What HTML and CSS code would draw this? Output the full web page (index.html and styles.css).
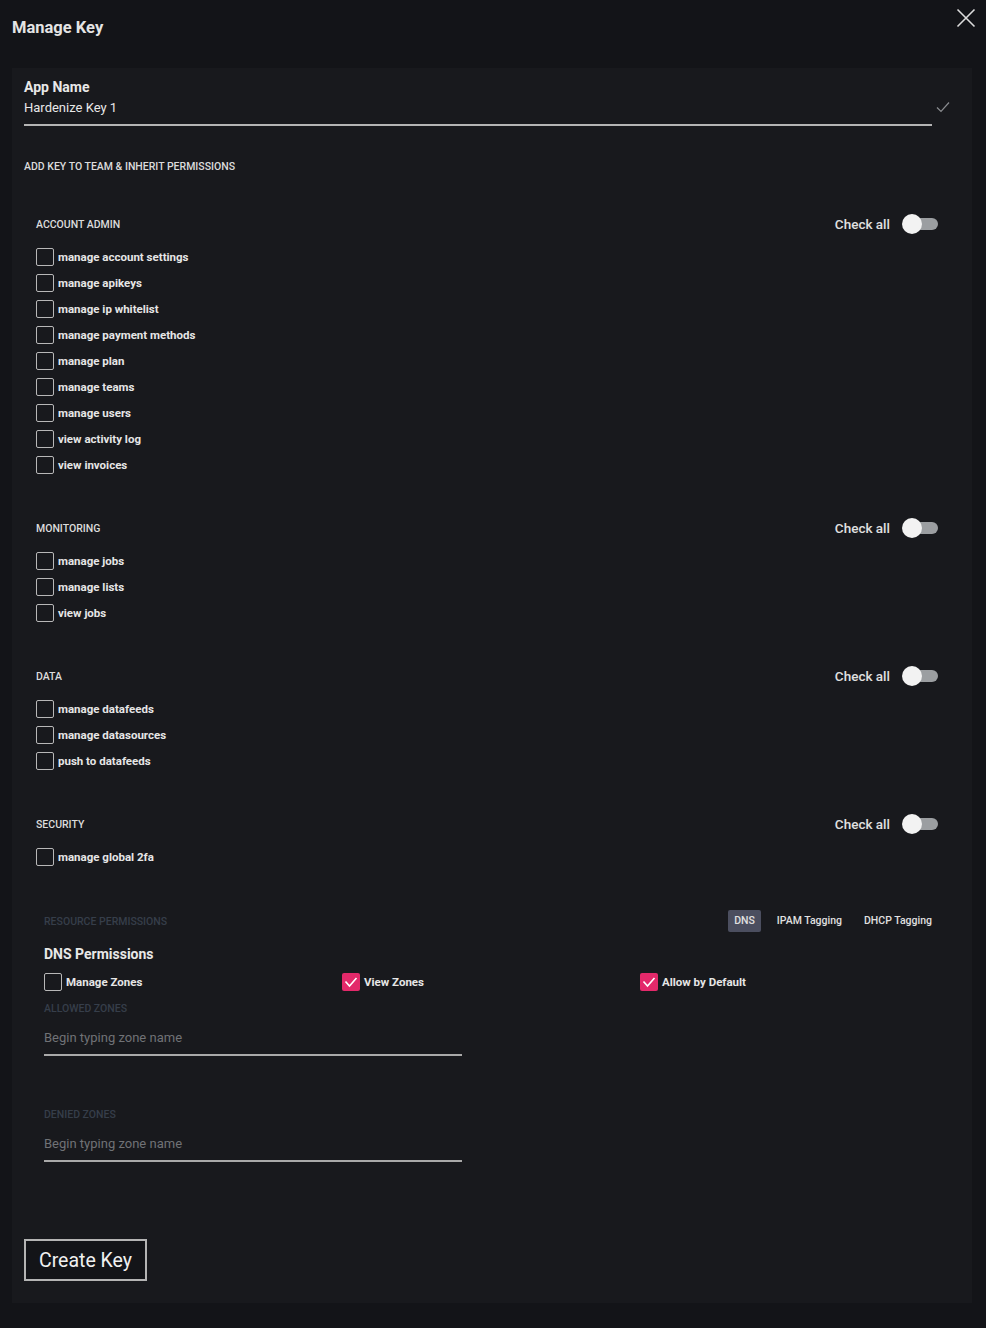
FILE: index.html
```html
<!DOCTYPE html>
<html lang="en">
<head>
    <meta charset="UTF-8">
    <meta name="viewport" content="width=device-width, initial-scale=1.0">
    <title>Manage Key</title>
    <link rel="stylesheet" href="styles.css">
</head>
<body>

<div class="modal-header">
    <h1>Manage Key</h1>
    <button class="close-btn" aria-label="Close">
        <svg width="20" height="20" viewBox="0 0 20 20"><path d="M1.5 1.5L18.5 18.5M18.5 1.5L1.5 18.5" stroke="#dcdcdc" stroke-width="1.6" fill="none"/></svg>
    </button>
</div>

<div class="card">
    <div class="app-name">
        <div class="field">
            <label>App Name</label>
            <div class="field-value">Hardenize Key 1</div>
        </div>
        <svg class="field-ok" width="14" height="12" viewBox="0 0 14 12"><path d="M1 6.5L5 10.5L13 1.5" stroke="#8a8c90" stroke-width="1.2" fill="none"/></svg>
    </div>

    <div class="caption">Add key to team &amp; inherit permissions</div>

    <div class="perm-group">
        <div class="perm-head">
            <span>Account Admin</span>
            <span class="check-all">Check all <span class="toggle"></span></span>
        </div>
        <div class="perm-list">
            <label class="perm"><span class="box"></span>manage account settings</label>
            <label class="perm"><span class="box"></span>manage apikeys</label>
            <label class="perm"><span class="box"></span>manage ip whitelist</label>
            <label class="perm"><span class="box"></span>manage payment methods</label>
            <label class="perm"><span class="box"></span>manage plan</label>
            <label class="perm"><span class="box"></span>manage teams</label>
            <label class="perm"><span class="box"></span>manage users</label>
            <label class="perm"><span class="box"></span>view activity log</label>
            <label class="perm"><span class="box"></span>view invoices</label>
        </div>
    </div>

    <div class="perm-group">
        <div class="perm-head">
            <span>Monitoring</span>
            <span class="check-all">Check all <span class="toggle"></span></span>
        </div>
        <div class="perm-list">
            <label class="perm"><span class="box"></span>manage jobs</label>
            <label class="perm"><span class="box"></span>manage lists</label>
            <label class="perm"><span class="box"></span>view jobs</label>
        </div>
    </div>

    <div class="perm-group">
        <div class="perm-head">
            <span>Data</span>
            <span class="check-all">Check all <span class="toggle"></span></span>
        </div>
        <div class="perm-list">
            <label class="perm"><span class="box"></span>manage datafeeds</label>
            <label class="perm"><span class="box"></span>manage datasources</label>
            <label class="perm"><span class="box"></span>push to datafeeds</label>
        </div>
    </div>

    <div class="perm-group">
        <div class="perm-head">
            <span>Security</span>
            <span class="check-all">Check all <span class="toggle"></span></span>
        </div>
        <div class="perm-list">
            <label class="perm"><span class="box"></span>manage global 2fa</label>
        </div>
    </div>

    <div class="resources">
        <div class="res-head">
            <span class="dim-label">Resource Permissions</span>
            <div class="tabs">
                <span class="tab active">DNS</span>
                <span class="tab">IPAM Tagging</span>
                <span class="tab">DHCP Tagging</span>
            </div>
        </div>
        <h2>DNS Permissions</h2>
        <div class="res-options">
            <label class="perm"><span class="box"></span>Manage Zones</label>
            <label class="perm"><span class="box checked"><svg width="14" height="12" viewBox="0 0 14 12"><path d="M1.5 5.5L5.5 10L12.5 2" stroke="#fff" stroke-width="1.6" fill="none"/></svg></span>View Zones</label>
            <label class="perm"><span class="box checked"><svg width="14" height="12" viewBox="0 0 14 12"><path d="M1.5 5.5L5.5 10L12.5 2" stroke="#fff" stroke-width="1.6" fill="none"/></svg></span>Allow by Default</label>
        </div>

        <div class="dim-label zone-label">Allowed Zones</div>
        <div class="zone-input">Begin typing zone name</div>

        <div class="dim-label zone-label denied">Denied Zones</div>
        <div class="zone-input">Begin typing zone name</div>
    </div>

    <button class="create-btn">Create Key</button>
</div>

</body>
</html>
```

FILE: styles.css
```css
body {
    margin: 0;
    background-color: #131418;
    color: #e8e8e8;
    font-family: Roboto, "Liberation Sans", sans-serif;
}
.modal-header {
    height: 68px;
    padding: 0 10px 0 12px;
    display: flex;
    justify-content: space-between;
    align-items: flex-start;
}
.modal-header h1 {
    margin: 17px 0 0;
    font-size: 16.5px;
    font-weight: 700;
    line-height: 22px;
    color: #e4e4e4;
}
.close-btn {
    margin-top: 8px;
    padding: 0;
    border: none;
    background: none;
    cursor: pointer;
}
.card {
    margin: 0 14px 25px 12px;
    padding: 10px 12px 22px;
    background-color: #18191d;
}
.app-name {
    display: flex;
    align-items: flex-end;
}
.field {
    width: 908px;
    border-bottom: 2px solid #b4b4b4;
    padding-bottom: 7px;
}
.field label {
    display: block;
    font-size: 14px;
    font-weight: 700;
    line-height: 18px;
}
.field-value {
    font-size: 13px;
    line-height: 18px;
    margin-top: 3px;
}
.field-ok {
    margin: 0 0 13px 4px;
}
.caption {
    margin-top: 33px;
    font-size: 10.5px;
    font-weight: 500;
    line-height: 16px;
    text-transform: uppercase;
    color: #dcdcdc;
}
.perm-group {
    margin-top: 36px;
    padding: 0 22px 0 12px;
}
.perm-group + .perm-group {
    margin-top: 37px;
}
.perm-head {
    height: 26px;
    display: flex;
    justify-content: space-between;
    align-items: center;
    font-size: 10.5px;
    font-weight: 500;
    text-transform: uppercase;
    color: #dcdcdc;
}
.check-all {
    display: flex;
    align-items: center;
    gap: 14px;
    font-size: 13.5px;
    text-transform: none;
    color: #e0e0e0;
}
.toggle {
    position: relative;
    width: 34px;
    height: 12px;
    border-radius: 6px;
    background-color: #9b9ea1;
}
.toggle::before {
    content: "";
    position: absolute;
    left: -2px;
    top: -4px;
    width: 20px;
    height: 20px;
    border-radius: 50%;
    background-color: #f2f2f2;
}
.perm-list {
    margin-top: 7px;
}
.perm {
    height: 26px;
    display: flex;
    align-items: center;
    gap: 4px;
    font-size: 11.5px;
    font-weight: 700;
    color: #e6e6e6;
}
.box {
    box-sizing: border-box;
    width: 18px;
    height: 18px;
    border: 1px solid #b8b8b8;
    border-radius: 2px;
    display: flex;
    align-items: center;
    justify-content: center;
}
.box.checked {
    border: none;
    background-color: #e3296a;
}
.resources {
    margin-top: 38px;
    padding: 0 22px 0 20px;
}
.res-head {
    height: 26px;
    display: flex;
    justify-content: space-between;
    align-items: center;
}
.dim-label {
    font-size: 10.5px;
    font-weight: 500;
    text-transform: uppercase;
    color: #363e4a;
}
.tabs {
    display: flex;
}
.tab {
    padding: 0 6px;
    line-height: 22px;
    font-size: 10.5px;
    font-weight: 500;
    color: #e0e0e0;
    border-radius: 2px;
}
.tab + .tab {
    margin-left: 10px;
}
.tab.active {
    background-color: #4b4e5f;
}
.resources h2 {
    margin: 11px 0 0;
    font-size: 14px;
    font-weight: 700;
    line-height: 18px;
}
.res-options {
    margin-top: 6px;
    display: grid;
    grid-template-columns: repeat(3, 1fr);
}
.zone-label {
    line-height: 14px;
    margin-top: 7px;
}
.zone-label.denied {
    margin-top: 52px;
}
.zone-input {
    width: 418px;
    margin-top: 14px;
    padding-bottom: 8px;
    border-bottom: 2px solid #a9a9a9;
    font-size: 13px;
    line-height: 16px;
    color: #707276;
}
.create-btn {
    margin-top: 77px;
    padding: 0 13px;
    height: 42px;
    border: 2px solid #b4b4b4;
    background-color: #131418;
    color: #f0f0f0;
    font-family: Roboto, "Liberation Sans", sans-serif;
    font-size: 19.5px;
    cursor: pointer;
}
```
